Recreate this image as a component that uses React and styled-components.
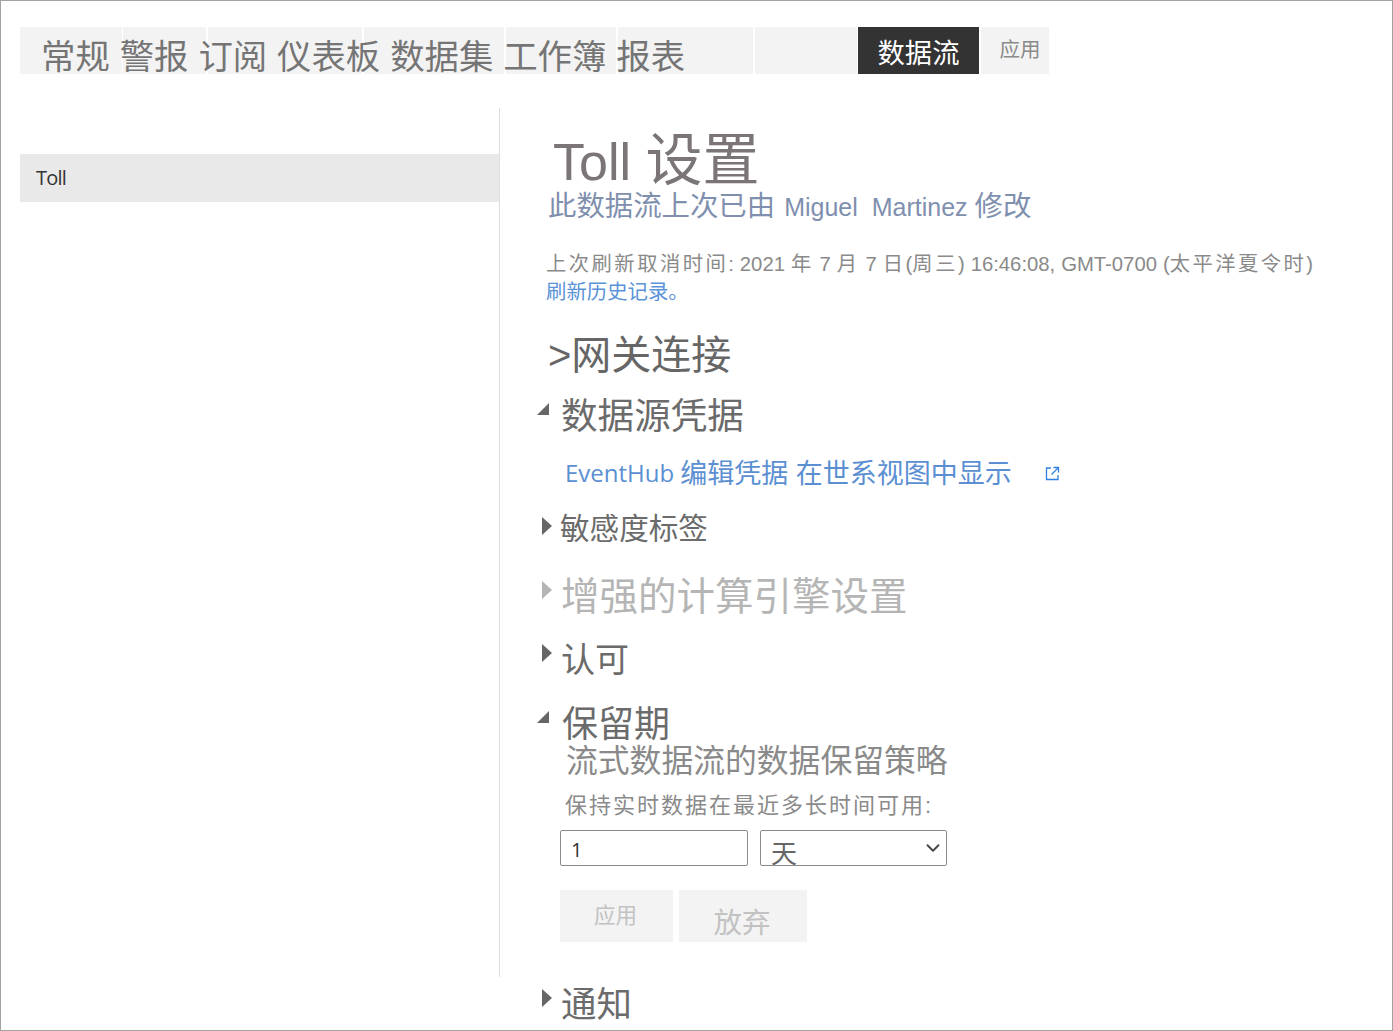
import React from "react";
import styled, { createGlobalStyle } from "styled-components";
import { ChevronDown } from "lucide-react";

const cjk = `"Liberation Sans", "Noto Sans CJK SC", sans-serif`;

const Global = createGlobalStyle`
  html, body { margin: 0; padding: 0; background: #fff; }
  * { box-sizing: border-box; }
`;

const Page = styled.div`
  width: 1393px;
  height: 1031px;
  border: 1px solid #a3a3a3;
  padding-top: 26px;
  overflow: hidden;
  font-family: ${cjk};
  background: #fff;
`;

const Nav = styled.nav`
  position: relative;
  height: 47px;
  margin-left: 19px;
  display: flex;
`;

const Cell = styled.div`
  width: ${(p) => p.$w}px;
  margin-right: ${(p) => p.$gap}px;
  height: 47px;
  flex: none;
  display: flex;
  align-items: center;
  justify-content: center;
  padding: ${(p) => p.$pad || "0"};
  background: ${(p) => (p.$active ? "#333333" : "#f3f3f3")};
  color: ${(p) => (p.$active ? "#ffffff" : "#8a8a8a")};
  font-size: ${(p) => p.$size || 20}px;
`;

const NavLabels = styled.div`
  position: absolute;
  left: 21px;
  top: 8px;
  display: flex;
  gap: 9.9px;
  line-height: 44px;
  font-size: 34.4px;
  color: #757575;
  white-space: nowrap;
`;

const Layout = styled.div`
  display: flex;
  margin-top: 34px;
  margin-left: 19px;
`;

const Sidebar = styled.aside`
  width: 480px;
  height: 869px;
  flex: none;
  padding-top: 46px;
  border-right: 1px solid #dedede;
`;

const SideItem = styled.div`
  height: 48px;
  background: #e9e9e9;
  padding-left: 16px;
  font-family: "Open Sans", sans-serif;
  font-size: 20px;
  line-height: 48px;
  letter-spacing: -0.8px;
  color: #333;
`;

const Content = styled.main`
  flex: 1;
  padding-left: 36px;
  padding-top: 26px;
  white-space: nowrap;
`;

const Title = styled.h1`
  margin: 0 0 0 17px;
  height: 56px;
  font-size: 52px;
  line-height: 52px;
  font-weight: 400;
  color: #7b7577;
`;

const TitleCjk = styled.span`
  font-size: 57px;
`;

const Subtitle = styled.div`
  margin-left: 12px;
  font-size: 28.4px;
  line-height: 32px;
  color: #7f8fae;
`;

const Latin = styled.span`
  font-size: 25px;
  margin: 0 7px 0 9px;
`;

const Meta = styled.div`
  margin: 27px 0 0 10px;
  font-size: 20.3px;
  word-spacing: 0.3px;
  line-height: 28px;
  color: #8a8a8a;
`;

const Spaced = styled.span`
  letter-spacing: 2.5px;
`;

const HistoryLink = styled.a`
  display: block;
  margin-left: 10px;
  font-size: 20.4px;
  line-height: 28px;
  color: #5b93d8;
`;

const Row = styled.div`
  display: flex;
  margin-top: ${(p) => p.$mt}px;
  height: ${(p) => p.$lh}px;
  line-height: ${(p) => p.$lh}px;
  font-size: ${(p) => p.$size}px;
  color: ${(p) => p.$color || "#6b6b6b"};
`;

const Gutter = styled.div`
  width: ${(p) => p.$w}px;
  flex: none;
  display: flex;
  align-items: flex-start;
`;

const CaretSvg = styled.svg`
  flex: none;
  margin-left: ${(p) => p.$x}px;
  margin-top: ${(p) => p.$y}px;
`;

const Caret = ({ open, x, y, color = "#666" }) =>
  open ? (
    <CaretSvg $x={x} $y={y} width="12" height="12" viewBox="0 0 12 12">
      <path d="M12 0V12H0Z" fill={color} />
    </CaretSvg>
  ) : (
    <CaretSvg $x={x} $y={y} width="10" height="18" viewBox="0 0 10 18">
      <path d="M0 0L10 9L0 18Z" fill={color} />
    </CaretSvg>
  );

const LinkRow = styled.a`
  display: flex;
  align-items: center;
  margin: 18px 0 0 29px;
  height: 34px;
  font-size: 27px;
  line-height: 34px;
  color: #5b8fd2;
`;

const EventHub = styled.span`
  font-family: "Open Sans", sans-serif;
  font-size: 24px;
  margin-right: 6px;
  margin-top: -2px;
`;

const ExternalIcon = styled.svg`
  margin-left: 33px;
  margin-top: -2px;
  flex: none;
`;

const PolicyTitle = styled.div`
  margin: -2px 0 0 30px;
  font-size: 31.8px;
  line-height: 36px;
  color: #8a8a8a;
`;

const FieldLabel = styled.label`
  display: block;
  margin: 12px 0 0 29px;
  font-size: 22px;
  letter-spacing: 2px;
  line-height: 30px;
  color: #8a8a8a;
`;

const Fields = styled.div`
  display: flex;
  gap: 12px;
  margin: 9px 0 0 24px;
`;

const NumberInput = styled.input`
  width: 188px;
  height: 36px;
  border: 1px solid #8a8a8a;
  border-radius: 2px;
  padding: 2px 10px 0;
  font-family: "Open Sans", sans-serif;
  font-size: 20px;
  color: #333;
  outline: none;
`;

const SelectWrap = styled.div`
  position: relative;
  width: 187px;
  height: 36px;
`;

const UnitSelect = styled.select`
  width: 100%;
  height: 100%;
  appearance: none;
  border: 1px solid #8a8a8a;
  border-radius: 2px;
  background: #fff;
  padding: 9px 0 0 10px;
  font-family: ${cjk};
  font-size: 26px;
  line-height: 28px;
  color: #666;
  outline: none;
`;

const Chevron = styled(ChevronDown)`
  position: absolute;
  right: 3px;
  top: 7px;
  color: #444;
`;

const Buttons = styled.div`
  display: flex;
  gap: 6px;
  margin: 24px 0 0 24px;
`;

const Btn = styled.button`
  width: ${(p) => p.$w}px;
  height: 52px;
  border: 0;
  padding: ${(p) => p.$pt}px 2px 0 0;
  background: #f3f3f3;
  color: #c2c2c2;
  font-family: ${cjk};
  font-size: ${(p) => p.$size}px;
  line-height: 32px;
  display: flex;
  justify-content: center;
  align-items: flex-start;
`;

export default function App() {
  return (
    <Page>
      <Global />
      <Nav>
        <Cell $w={102} $gap={1} />
        <Cell $w={83} $gap={2} />
        <Cell $w={154} $gap={2} />
        <Cell $w={140} $gap={2} />
        <Cell $w={110} $gap={2} />
        <Cell $w={135} $gap={2} />
        <Cell $w={102} $gap={1} />
        <Cell $w={121} $gap={2} $active $size={27.3}>数据流</Cell>
        <Cell $w={68} $gap={0} $size={20.5} $pad="0 0 6px 10px">应用</Cell>
        <NavLabels>
          <span>常规</span>
          <span>警报</span>
          <span>订阅</span>
          <span>仪表板</span>
          <span>数据集</span>
          <span>工作簿</span>
          <span>报表</span>
        </NavLabels>
      </Nav>
      <Layout>
        <Sidebar>
          <SideItem>Toll</SideItem>
        </Sidebar>
        <Content>
          <Title>Toll <TitleCjk>设置</TitleCjk></Title>
          <Subtitle>
            此数据流上次已由<Latin>Miguel&nbsp; Martinez</Latin>修改
          </Subtitle>
          <Meta>
            <Spaced>上次刷新取消时间</Spaced>: 2021 <Spaced>年</Spaced> 7 <Spaced>月</Spaced> 7 <Spaced>日</Spaced>(<Spaced>周三</Spaced>) 16:46:08, GMT-0700 (<Spaced>太平洋夏令时</Spaced>)
          </Meta>
          <HistoryLink>刷新历史记录。</HistoryLink>
          <Row $mt={24} $lh={50} $size={40} $color="#666">
            <Gutter $w={12} />
            <span>&gt;网关连接</span>
          </Row>
          <Row $mt={15} $lh={44} $size={36.6}>
            <Gutter $w={25}><Caret open x={1} y={8} /></Gutter>
            <span>数据源凭据</span>
          </Row>
          <LinkRow>
            <EventHub>EventHub</EventHub>编辑凭据 在世系视图中显示
            <ExternalIcon width="15" height="15" viewBox="0 0 15 15" fill="none" stroke="#2f80e0" strokeWidth="1.3">
              <path d="M6 2H1.5V13.5H13V9" />
              <path d="M8.5 1.5H13.5V6.5" />
              <path d="M13 2L6.5 8.5" />
            </ExternalIcon>
          </LinkRow>
          <Row $mt={20} $lh={36} $size={29.6}>
            <Gutter $w={24}><Caret x={6} y={6} /></Gutter>
            <span>敏感度标签</span>
          </Row>
          <Row $mt={28} $lh={44} $size={38.5} $color="#b5b5b5">
            <Gutter $w={25}><Caret x={6} y={6} color="#b5b5b5" /></Gutter>
            <span>增强的计算引擎设置</span>
          </Row>
          <Row $mt={19} $lh={44} $size={34}>
            <Gutter $w={25}><Caret x={6} y={6} /></Gutter>
            <span>认可</span>
          </Row>
          <Row $mt={23} $lh={40} $size={36}>
            <Gutter $w={26}><Caret open x={1} y={6} /></Gutter>
            <span>保留期</span>
          </Row>
          <PolicyTitle>流式数据流的数据保留策略</PolicyTitle>
          <FieldLabel>保持实时数据在最近多长时间可用:</FieldLabel>
          <Fields>
            <NumberInput defaultValue="1" />
            <SelectWrap>
              <UnitSelect defaultValue="天">
                <option>天</option>
              </UnitSelect>
              <Chevron size={22} strokeWidth={2} />
            </SelectWrap>
          </Fields>
          <Buttons>
            <Btn $w={113} $size={21.5} $pt={10}>应用</Btn>
            <Btn $w={128} $size={28.5} $pt={17}>放弃</Btn>
          </Buttons>
          <Row $mt={41} $lh={44} $size={35.5}>
            <Gutter $w={25}><Caret x={6} y={6} /></Gutter>
            <span>通知</span>
          </Row>
        </Content>
      </Layout>
    </Page>
  );
}
